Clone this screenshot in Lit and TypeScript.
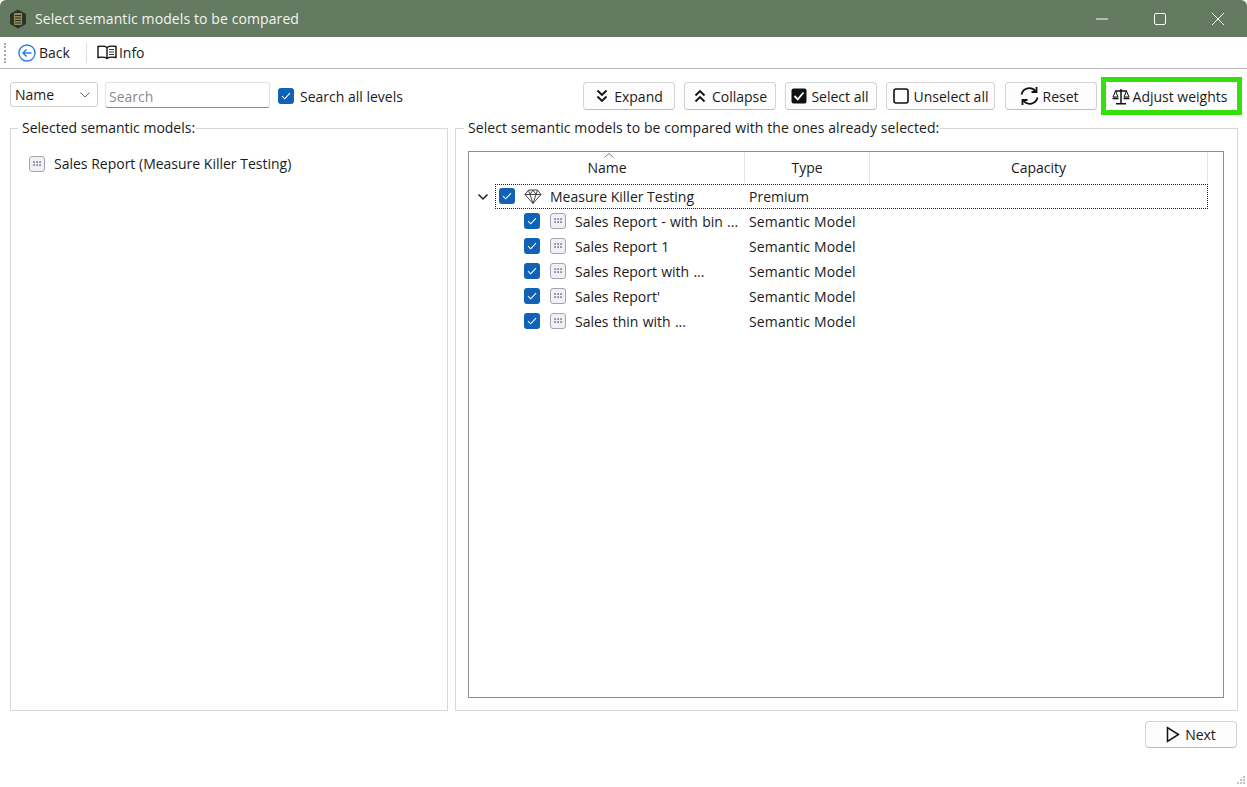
import { LitElement, css, html, svg } from "lit";
import { customElement } from "lit/decorators.js";

const children = [
  "Sales Report - with bin ...",
  "Sales Report 1",
  "Sales Report with ...",
  "Sales Report'",
  "Sales thin with ...",
];

const check = html`<span class="check">
  <svg width="10" height="8" viewBox="0 0 10 8"><path d="M1 4.200 3.700 6.800 9 1.200" fill="none" stroke="#fff" stroke-width="1.100" /></svg>
</span>`;

const modelIcon = html`<svg class="model" width="16" height="16" viewBox="0 0 16 16">
  <rect x=".5" y=".5" width="15" height="15" rx="2.500" fill="#f1f0f4" stroke="#a5a3ab" />
  ${[5, 8, 11].map((x) =>
    [6, 9].map((y) => svg`<rect x=${x - 0.7} y=${y - 0.7} width="1.500" height="1.500" fill="#5e5a8c" />`),
  )}
</svg>`;

const icons = {
  expand: html`<svg width="14" height="16" viewBox="0 0 14 16"><path d="M2.500 2.500 7 7l4.500-4.500M2.500 8.500 7 13l4.500-4.500" fill="none" stroke="#111" stroke-width="1.800" /></svg>`,
  collapse: html`<svg width="14" height="16" viewBox="0 0 14 16"><path d="M2.500 7.500 7 3l4.500 4.500M2.500 13.500 7 9l4.500 4.500" fill="none" stroke="#111" stroke-width="1.800" /></svg>`,
  selectAll: html`<svg width="16" height="16" viewBox="0 0 16 16"><rect x=".5" y=".5" width="15" height="15" rx="2" fill="#111" /><path d="M3.500 8 6.800 11.300 12.500 4.500" fill="none" stroke="#fff" stroke-width="1.800" /></svg>`,
  unselect: html`<svg width="16" height="16" viewBox="0 0 16 16"><rect x="1" y="1" width="14" height="14" rx="2" fill="none" stroke="#111" stroke-width="1.600" /></svg>`,
  reset: html`<svg width="21" height="20" viewBox="0 0 21 20"><path d="M2.500 8.500A8 8 0 0 1 16.500 5.200M18.500 11.500A8 8 0 0 1 4.500 14.800" fill="none" stroke="#111" stroke-width="1.800" /><path d="M17.500 1v5h-5M3.500 19v-5h5" fill="none" stroke="#111" stroke-width="1.800" /></svg>`,
  weights: html`<svg width="18" height="17" viewBox="0 0 18 17"><path d="M9 1v14M4 15.800h10M3 3h12" fill="none" stroke="#111" stroke-width="1.500" /><path d="M3.500 3 1 9h5zM14.500 3 12 9h5z" fill="none" stroke="#111" stroke-width="1" /><path d="M.5 10.500h6M11.500 10.500h6" stroke="#111" stroke-width="1.400" /></svg>`,
};

@customElement("app-root")
export class AppRoot extends LitElement {
  static styles = css`
    :host {
      display: flex;
      flex-direction: column;
      height: 787px;
      background: #fff;
      font-family: "Open Sans", "Noto Sans", sans-serif;
      font-size: 14px;
      color: #1b1b1b;
      position: relative;
      overflow: hidden;
    }

    .titlebar {
      height: 37px;
      flex: none;
      display: flex;
      align-items: center;
      background: #647a61;
      color: #f3f5f2;
      padding-left: 9px;
      gap: 8px;
      border-radius: 6px 6px 0 0;
    }
    .caption {
      flex: 1;
      letter-spacing: 0.1px;
    }
    .winbtns {
      display: flex;
    }
    .winbtn {
      width: 58px;
      display: flex;
      justify-content: center;
    }

    .toolbar {
      height: 31px;
      flex: none;
      display: flex;
      align-items: center;
      border-bottom: 1px solid #bdbdbd;
      padding-left: 4px;
    }
    .grip {
      width: 1px;
      height: 20px;
      border-left: 2px dotted #a8a8a8;
      margin-right: 11px;
    }
    .tool {
      display: flex;
      align-items: center;
      gap: 3px;
    }
    .tool.info {
      gap: 2px;
    }
    .tool-sep {
      width: 1px;
      height: 20px;
      background: #dedede;
      margin: 0 10px 0 16px;
    }

    .filters {
      flex: none;
      display: flex;
      align-items: flex-start;
      height: 28px;
      margin-top: 13px;
      padding: 0 10px;
    }
    .combo {
      width: 88px;
      height: 25px;
      box-sizing: border-box;
      border: 1px solid #d0d0d0;
      border-radius: 3px;
      display: flex;
      align-items: center;
      justify-content: space-between;
      padding: 0 6px 0 4px;
    }
    .search {
      width: 165px;
      height: 26px;
      box-sizing: border-box;
      margin-left: 7px;
      border: 1px solid #e2e2e2;
      border-bottom: 1px solid #8a8a8a;
      border-radius: 3px;
      color: #8b8b8b;
      padding: 2px 3px 0;
      display: flex;
      align-items: center;
    }
    .search-all {
      display: flex;
      align-items: center;
      gap: 6px;
      height: 28px;
      margin-left: 8px;
    }
    .actions {
      margin-left: auto;
      display: flex;
      align-items: center;
      gap: 9px;
    }
    .btn {
      height: 28px;
      width: 92px;
      box-sizing: border-box;
      border: 1px solid #d3d3d3;
      border-bottom-color: #bdbdbd;
      border-radius: 4px;
      background: #fdfdfd;
      display: flex;
      align-items: center;
      justify-content: center;
      gap: 5px;
      white-space: nowrap;
    }
    .btn.select-all {
      gap: 4px;
      padding-right: 2px;
    }
    .btn.unselect {
      width: 109px;
    }
    .btn.reset {
      margin-left: 1px;
      gap: 2px;
      padding-right: 4px;
    }
    .btn.adjust {
      width: 131px;
      gap: 3px;
      padding-right: 4px;
      border-radius: 0;
      border: none;
      outline: 5px solid #35e00a;
    }

    .check {
      width: 16px;
      height: 16px;
      flex: none;
      border-radius: 3px;
      background: #0f62b5;
      display: inline-flex;
      align-items: center;
      justify-content: center;
    }

    .panels {
      flex: 1;
      min-height: 0;
      display: flex;
      gap: 7px;
      margin-top: 8px;
      padding: 0 9px 0 10px;
    }
    fieldset {
      margin: 0;
      padding: 0;
      min-width: 0;
      box-sizing: border-box;
      border: 1px solid #d8d8d8;
    }
    legend {
      margin-left: 7px;
      padding: 0 1px 0 4px;
      line-height: 20px;
    }
    .left {
      width: 438px;
      flex: none;
    }
    .selected {
      display: flex;
      align-items: center;
      gap: 9px;
      margin: 16px 0 0 18px;
    }
    .right {
      flex: 1;
      display: flex;
      flex-direction: column;
      padding: 13px 13px 12px 12px;
    }
    .right legend {
      margin-left: -4px;
      letter-spacing: 0.085px;
    }

    .tree {
      flex: 1;
      border: 1px solid #8f8f8f;
      min-height: 0;
    }
    .head,
    .row {
      display: grid;
      grid-template-columns: 276px 125px 338px;
    }
    .head {
      height: 32px;
      text-align: center;
    }
    .head > div {
      border-right: 1px solid #e4e4e4;
      padding-top: 6px;
      position: relative;
      box-sizing: border-box;
      height: 31px;
    }
    .head > div:first-child {
      padding-left: 1px;
    }
    .sort {
      position: absolute;
      top: 1px;
      left: 135px;
    }
    .row {
      height: 25px;
      align-items: center;
    }
    .row.root {
      position: relative;
      outline: 1px dotted #222;
      outline-offset: -1px;
      margin-left: 26px;
      grid-template-columns: 250px 125px 338px;
      width: 713px;
      box-sizing: border-box;
    }
    .name {
      display: flex;
      align-items: center;
      white-space: nowrap;
      overflow: hidden;
    }
    .root .name {
      padding-left: 4px;
      gap: 9px;
    }
    .diamond {
      margin-right: -1px;
    }
    .child .name {
      padding-left: 55px;
      gap: 10px;
    }
    .child .name span:last-child {
      word-spacing: 0.6px;
    }
    .child .model {
      margin-right: -1px;
    }
    .row .check,
    .row .model {
      margin-bottom: 1px;
    }
    .type {
      padding-left: 4px;
    }
    .child .type {
      letter-spacing: 0.14px;
    }
    .chevron {
      position: absolute;
      left: -18px;
    }

    .footer {
      flex: none;
      height: 76px;
      display: flex;
      justify-content: flex-end;
      padding: 10px 10px 0 0;
      box-sizing: border-box;
    }
    .btn.next {
      height: 27px;
    }
    .resize {
      position: absolute;
      right: 0;
      bottom: 0;
    }
  `;

  render() {
    return html`
      <div class="titlebar">
        <svg width="18" height="20" viewBox="0 0 18 20">
          <path d="M9 .5 17 5v10l-8 4.500L1 15V5z" fill="#2c3327" />
          <rect x="5" y="4" width="8" height="12" rx="1" fill="#8d8a55" />
          <path d="M6 6.500h6M6 9h6M6 11.500h6M6 14h6" stroke="#2c3327" />
        </svg>
        <div class="caption">Select semantic models to be compared</div>
        <div class="winbtns">
          <div class="winbtn">
            <svg width="14" height="14" viewBox="0 0 14 14"><path d="M1 7h12" stroke="#fff" /></svg>
          </div>
          <div class="winbtn">
            <svg width="14" height="14" viewBox="0 0 14 14"><rect x="1.500" y="1.500" width="11" height="11" rx="1.500" fill="none" stroke="#fff" /></svg>
          </div>
          <div class="winbtn">
            <svg width="14" height="14" viewBox="0 0 14 14"><path d="M1 1l12 12M13 1 1 13" stroke="#fff" /></svg>
          </div>
        </div>
      </div>

      <div class="toolbar">
        <div class="grip"></div>
        <div class="tool">
          <svg width="18" height="18" viewBox="0 0 18 18">
            <circle cx="9" cy="9" r="8" fill="#fff" stroke="#2f7fdc" stroke-width="1.400" />
            <path d="M13.500 9h-8M8.500 5.500 5 9l3.500 3.500" fill="none" stroke="#2f7fdc" stroke-width="1.500" />
          </svg>
          Back
        </div>
        <div class="tool-sep"></div>
        <div class="tool info">
          <svg width="20" height="15" viewBox="0 0 20 15">
            <path d="M10 2.500C8 1 4 1 1 1.500v11c3-.5 7-.5 9 1 2-1.500 6-1.500 9-1v-11c-3-.5-7-.5-9 1zM10 2.500v11" fill="none" stroke="#111" stroke-width="1.400" />
            <path d="M12 4.500h5M12 7h5M12 9.500h5" stroke="#333" />
          </svg>
          Info
        </div>
      </div>

      <div class="filters">
        <div class="combo">
          Name
          <svg width="12" height="8" viewBox="0 0 12 8"><path d="M1.500 1.500 6 6l4.500-4.500" fill="none" stroke="#666" /></svg>
        </div>
        <div class="search">Search</div>
        <div class="search-all">${check}<span>Search all levels</span></div>
        <div class="actions">
          <div class="btn">${icons.expand}Expand</div>
          <div class="btn">${icons.collapse}Collapse</div>
          <div class="btn select-all">${icons.selectAll}Select all</div>
          <div class="btn unselect">${icons.unselect}Unselect all</div>
          <div class="btn reset">${icons.reset}Reset</div>
          <div class="btn adjust">${icons.weights}Adjust weights</div>
        </div>
      </div>

      <div class="panels">
        <fieldset class="left">
          <legend>Selected semantic models:</legend>
          <div class="selected">${modelIcon}<span>Sales Report (Measure Killer Testing)</span></div>
        </fieldset>
        <fieldset class="right">
          <legend>Select semantic models to be compared with the ones already selected:</legend>
          <div class="tree">
            <div class="head">
              <div>
                <svg class="sort" width="10" height="5" viewBox="0 0 10 5"><path d="M.5 4.500 5 .5l4.500 4" fill="none" stroke="#777" /></svg>
                Name
              </div>
              <div>Type</div>
              <div>Capacity</div>
            </div>
            <div class="row root">
              <svg class="chevron" width="12" height="8" viewBox="0 0 12 8"><path d="M1.500 1.500 6 6l4.500-4.500" fill="none" stroke="#222" stroke-width="1.500" /></svg>
              <div class="name">
                ${check}
                <svg class="diamond" width="18" height="15" viewBox="0 0 18 15">
                  <path d="M4.500 1h9L17 5.500l-8 9-8-9zM1 5.500h16M6 5.500l3 9 3-9M4.500 1 6 5.500 9 1l3 4.500L13.500 1" fill="none" stroke="#444" stroke-width="1" />
                </svg>
                <span>Measure Killer Testing</span>
              </div>
              <div class="type">Premium</div>
              <div></div>
            </div>
            ${children.map(
              (name) => html`
                <div class="row child">
                  <div class="name">${check}${modelIcon}<span>${name}</span></div>
                  <div class="type">Semantic Model</div>
                  <div></div>
                </div>
              `,
            )}
          </div>
        </fieldset>
      </div>

      <div class="footer">
        <div class="btn next">
          <svg width="14" height="17" viewBox="0 0 14 17"><path d="M1.500 1.500v14l11-7z" fill="none" stroke="#111" stroke-width="1.500" /></svg>
          Next
        </div>
      </div>

      <svg class="resize" width="12" height="12" viewBox="0 0 12 12">
        ${[[8, 1], [5, 4], [8, 4], [2, 7], [5, 7], [8, 7]].map(
          ([x, y]) => svg`<rect x=${x} y=${y} width="2" height="2" fill="#c4c4c4" />`,
        )}
      </svg>
    `;
  }
}
